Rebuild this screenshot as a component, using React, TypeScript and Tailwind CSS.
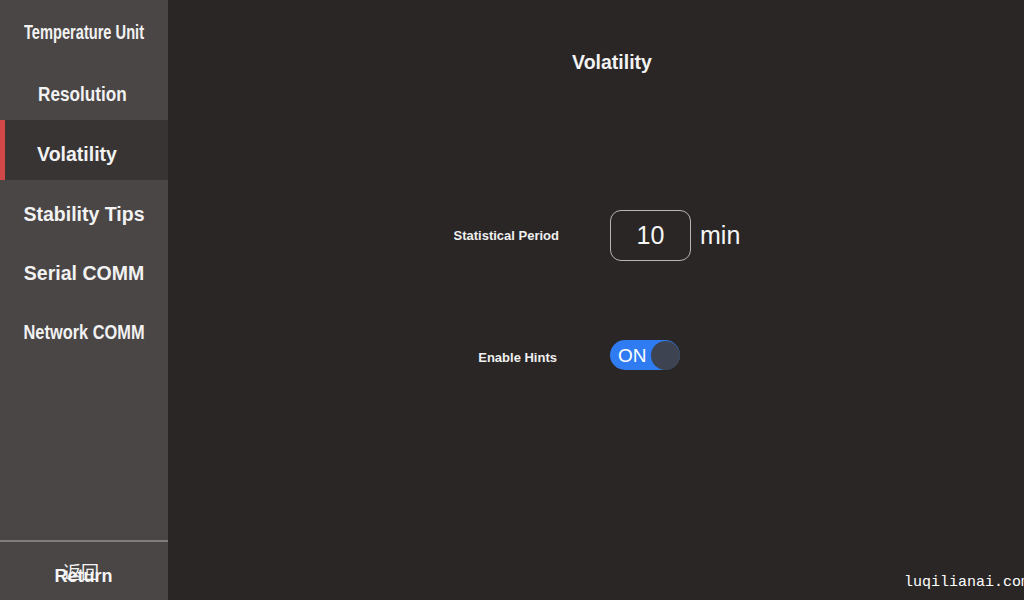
import { useState } from "react";

const menu = [
    { label: "Temperature Unit", cls: "pt-[5px] scale-x-[0.75]" },
    { label: "Resolution", cls: "pt-[9px] scale-x-[0.88] -ml-[4px]" },
    { label: "Volatility", cls: "pt-[9px]" },
    { label: "Stability Tips", cls: "pt-[9px]" },
    { label: "Serial COMM", cls: "pt-[7px]" },
    { label: "Network COMM", cls: "pt-[5px] scale-x-[0.84]" },
];

export default function App() {
    const [active, setActive] = useState(2);
    const [hints, setHints] = useState(true);

    return (
        <div className="flex h-[600px] w-[1024px] overflow-hidden bg-[#2a2626] text-white font-['Liberation_Sans',Arial,sans-serif]">
            {/* Sidebar */}
            <aside className="flex w-[168px] shrink-0 flex-col bg-[#4a4646]">
                <nav className="flex-1">
                    {menu.map((item, i) => (
                        <button
                            key={item.label}
                            onClick={() => setActive(i)}
                            className={`relative flex h-[60px] w-full items-center justify-center ${
                                active === i ? "bg-[#383434] pr-[14px]" : ""
                            }`}
                        >
                            {active === i && (
                                <span className="absolute left-0 top-0 h-full w-[5px] bg-[#d24848]" />
                            )}
                            <span
                                className={`whitespace-nowrap text-[19.5px] font-bold leading-none text-[#f2f2f2] ${item.cls}`}
                            >
                                {item.label}
                            </span>
                        </button>
                    ))}
                </nav>

                {/* Return */}
                <div className="h-[60px] border-t-2 border-[#807c7c]">
                    <div className="relative flex h-full items-center justify-center pt-[10px] pr-[1px]">
                        <span className="text-[18px] font-semibold leading-none text-[#f5f5f5]">Return</span>
                        <span className="absolute left-[63px] top-[20px] text-[18px] leading-none text-[#f5f5f5] font-['Noto_Sans_CJK_SC',sans-serif]">
                            返回
                        </span>
                    </div>
                </div>
            </aside>

            {/* Main content */}
            <main className="relative flex flex-1 flex-col">
                <h1 className="mt-[51px] pl-[32px] text-center text-[19.5px] font-bold leading-[22px] text-[#f2f2f2]">
                    Volatility
                </h1>

                <div className="mt-[137px] flex items-center">
                    <div className="w-[391px] text-right text-[13px] font-bold text-[#f0f0f0]">
                        Statistical Period
                    </div>
                    <div className="ml-[51px] flex h-[51px] w-[81px] items-center justify-center rounded-[11px] border border-[#b5b5b5] text-[25px] text-[#f5f5f5]">
                        10
                    </div>
                    <span className="ml-[9px] text-[25px] text-[#f5f5f5]">min</span>
                </div>

                <div className="mt-[79px] flex items-center">
                    <div className="w-[389px] pt-[5px] text-right text-[13px] font-bold text-[#f0f0f0]">
                        Enable Hints
                    </div>
                    <button
                        onClick={() => setHints(!hints)}
                        className={`ml-[53px] flex h-[30px] w-[70px] items-center rounded-full ${
                            hints ? "bg-[#2f7cf2]" : "bg-[#6a6a6a]"
                        }`}
                    >
                        {hints ? (
                            <>
                                <span className="ml-[8px] text-[19px] leading-none text-white">ON</span>
                                <span className="ml-auto h-[29px] w-[29px] rounded-full bg-[#3d4350]" />
                            </>
                        ) : (
                            <>
                                <span className="h-[29px] w-[29px] rounded-full bg-[#3d4350]" />
                                <span className="ml-auto mr-[6px] text-[19px] leading-none text-white">OFF</span>
                            </>
                        )}
                    </button>
                </div>

                <span className="absolute bottom-[10px] right-[-6px] font-['Liberation_Mono',monospace] text-[15px] leading-none text-white">
                    luqilianai.com
                </span>
            </main>
        </div>
    );
}
